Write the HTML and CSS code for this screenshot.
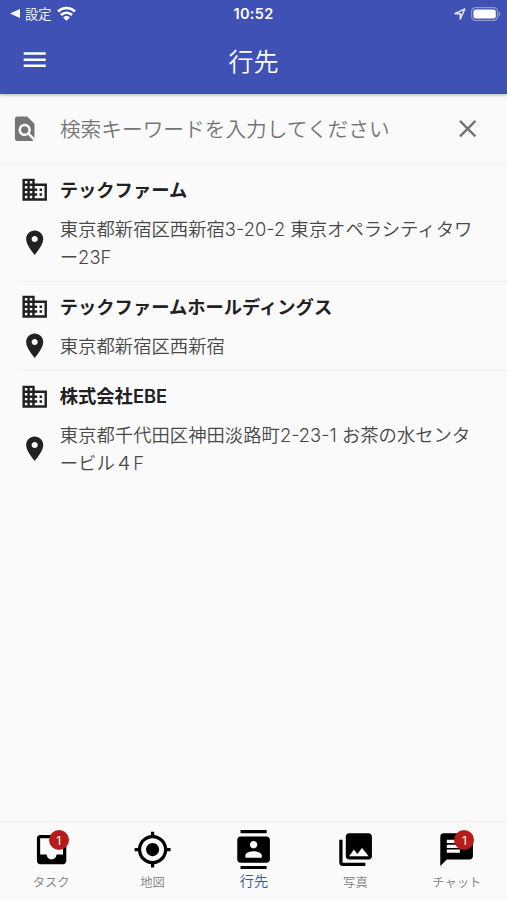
FILE: index.html
```html
<!DOCTYPE html>
<html lang="ja">
  <head>
    <meta charset="UTF-8" />
    <title>行先</title>
    <link rel="stylesheet" href="styles.css">
  </head>
  <body>
    <!-- shared icons -->
    <svg class="defs" width="0" height="0">
      <symbol id="building" viewBox="0 0 24 24">
        <path d="M12 7V3H2v18h20V7H12zM6 19H4v-2h2v2zm0-4H4v-2h2v2zm0-4H4V9h2v2zm0-4H4V5h2v2zm4 12H8v-2h2v2zm0-4H8v-2h2v2zm0-4H8V9h2v2zm0-4H8V5h2v2zm10 12h-8v-2h2v-2h-2v-2h2v-2h-2V9h8v10zm-2-8h-2v2h2v-2zm0 4h-2v2h2v-2z" />
      </symbol>
      <symbol id="pin" viewBox="0 0 24 24">
        <path d="M12 2C8.13 2 5 5.13 5 9c0 5.25 7 13 7 13s7-7.75 7-13c0-3.87-3.13-7-7-7zm0 9.5c-1.38 0-2.5-1.12-2.5-2.5s1.12-2.5 2.5-2.5 2.5 1.12 2.5 2.5-1.12 2.5-2.5 2.5z" />
      </symbol>
    </svg>

    <header class="header">
      <div class="status-bar">
        <div class="status-left">
          <svg class="back" viewBox="0 0 10 9"><path d="M0 4.5L10 0v9z" /></svg>
          <span class="back-label">設定</span>
          <svg class="wifi" viewBox="0 0 18 14">
            <path d="M1 5.1a11.4 11.4 0 0 1 16 0M3.8 8.4a7.4 7.4 0 0 1 10.4 0" />
            <path class="dot" d="M9 13.8L5.8 10.7a4.6 4.6 0 0 1 6.4 0z" />
          </svg>
        </div>
        <div class="clock">10:52</div>
        <div class="status-right">
          <svg class="location" viewBox="0 0 12 12"><path d="M1 5.6L10.8 1 6.3 10.9V5.7z" /></svg>
          <svg class="battery" viewBox="0 0 30 14">
            <rect class="shell" x="0.6" y="0.6" width="26" height="12.8" rx="4" />
            <rect class="level" x="2.4" y="2.4" width="22.4" height="9.2" rx="2.3" />
            <path class="cap" d="M27.8 4.5q3.4 2.5 0 5z" />
          </svg>
        </div>
      </div>
      <div class="toolbar">
        <svg class="icon" viewBox="0 0 24 24"><path d="M3 18h18v-2H3v2zm0-5h18v-2H3v2zm0-7v2h18V6H3z" /></svg>
        <h1 class="title">行先</h1>
      </div>
    </header>

    <div class="search">
      <svg class="icon" viewBox="0 0 24 24"><path d="M20 19.59V8l-6-6H6c-1.1 0-1.99.9-1.99 2L4 20c0 1.1.89 2 1.99 2H18c.45 0 .85-.15 1.19-.4l-4.43-4.43c-.8.52-1.74.83-2.76.83-2.76 0-5-2.24-5-5s2.24-5 5-5 5 2.24 5 5c0 1.02-.31 1.96-.83 2.75L20 19.59zM9 13c0 1.66 1.34 3 3 3s3-1.34 3-3-1.34-3-3-3-3 1.34-3 3z" /></svg>
      <span class="placeholder">検索キーワードを入力してください</span>
      <svg class="icon" viewBox="0 0 24 24"><path d="M19 6.41L17.59 5 12 10.59 6.41 5 5 6.41 10.59 12 5 17.59 6.41 19 12 13.41 17.59 19 19 17.59 13.41 12z" /></svg>
    </div>

    <main class="list">
      <div class="item">
        <div class="row name">
          <svg class="icon"><use href="#building" /></svg>
          <span>テックファーム</span>
        </div>
        <div class="row address">
          <svg class="icon"><use href="#pin" /></svg>
          <span>東京都新宿区西新宿3-20-2 東京オペラシティタワ<br>ー23F</span>
        </div>
      </div>
      <div class="item">
        <div class="row name">
          <svg class="icon"><use href="#building" /></svg>
          <span>テックファームホールディングス</span>
        </div>
        <div class="row address">
          <svg class="icon"><use href="#pin" /></svg>
          <span>東京都新宿区西新宿</span>
        </div>
      </div>
      <div class="item">
        <div class="row name">
          <svg class="icon"><use href="#building" /></svg>
          <span>株式会社EBE</span>
        </div>
        <div class="row address">
          <svg class="icon"><use href="#pin" /></svg>
          <span>東京都千代田区神田淡路町2-23-1 お茶の水センタ<br>ービル４F</span>
        </div>
      </div>
    </main>

    <nav class="tabs">
      <div class="tab">
        <svg class="tab-icon" viewBox="0 0 24 24"><path d="M19 3H4.99c-1.11 0-1.98.89-1.98 2L3 19c0 1.1.88 2 1.99 2H19c1.1 0 2-.9 2-2V5c0-1.11-.9-2-2-2zm0 12h-4c0 1.66-1.35 3-3 3s-3-1.34-3-3H4.99V5H19v10z" /></svg>
        <span class="badge">1</span>
        <span class="label">タスク</span>
      </div>
      <div class="tab">
        <svg class="tab-icon" viewBox="0 0 24 24"><path d="M12 8c-2.21 0-4 1.79-4 4s1.79 4 4 4 4-1.79 4-4-1.79-4-4-4zm8.94 3c-.46-4.17-3.77-7.48-7.94-7.94V1h-2v2.06C6.83 3.52 3.52 6.83 3.06 11H1v2h2.06c.46 4.17 3.77 7.48 7.94 7.94V23h2v-2.06c4.17-.46 7.48-3.77 7.94-7.94H23v-2h-2.06zM12 19c-3.87 0-7-3.13-7-7s3.13-7 7-7 7 3.13 7 7-3.13 7-7 7z" /></svg>
        <span class="label">地図</span>
      </div>
      <div class="tab active">
        <svg class="tab-icon" viewBox="0 0 24 24"><path d="M20 0H4v2h16V0zM4 24h16v-2H4v2zM20 4H4c-1.1 0-2 .9-2 2v12c0 1.1.9 2 2 2h16c1.1 0 2-.9 2-2V6c0-1.1-.9-2-2-2zm-8 2.75c1.24 0 2.25 1.01 2.25 2.25s-1.01 2.25-2.25 2.25S9.75 10.24 9.75 9 10.76 6.75 12 6.75zM17 17H7v-1.5c0-1.67 3.33-2.5 5-2.5s5 .83 5 2.5V17z" /></svg>
        <span class="label">行先</span>
      </div>
      <div class="tab">
        <svg class="tab-icon" viewBox="0 0 24 24"><path d="M22 16V4c0-1.1-.9-2-2-2H8c-1.1 0-2 .9-2 2v12c0 1.1.9 2 2 2h12c1.1 0 2-.9 2-2zm-11-4l2.03 2.71L16 11l4 5H8l3-4zM2 6v14c0 1.1.9 2 2 2h14v-2H4V6H2z" /></svg>
        <span class="label">写真</span>
      </div>
      <div class="tab">
        <svg class="tab-icon" viewBox="0 0 24 24"><path d="M20 2H4c-1.1 0-1.99.9-1.99 2L2 22l4-4h14c1.1 0 2-.9 2-2V4c0-1.1-.9-2-2-2zM6 9h12v2H6V9zm8 5H6v-2h8v2zm4-6H6V6h12v2z" /></svg>
        <span class="badge">1</span>
        <span class="label">チャット</span>
      </div>
    </nav>
  </body>
</html>
```

FILE: styles.css
```css
* {
  box-sizing: border-box;
}

body {
  margin: 0;
  height: 900px;
  display: flex;
  flex-direction: column;
  overflow: hidden;
  background-color: #fafafa;
  color: #212121;
  font-family: Inter, "Noto Sans CJK JP", sans-serif;
}

svg {
  display: block;
  flex: none;
  fill: currentColor;
}

.defs {
  position: absolute;
}

.icon {
  width: 29.4px;
  height: 29.4px;
}

/* Header */
.header {
  height: 94px;
  flex: none;
  background-color: #3f51b5;
  color: #fff;
  box-shadow: 0 1px 3px rgba(0, 0, 0, 0.3);
  z-index: 1;
}

.status-bar {
  height: 27px;
  display: grid;
  grid-template-columns: 1fr auto 1fr;
  align-items: center;
  padding: 0 6px 0 10px;
}

.status-left,
.status-right {
  display: flex;
  align-items: center;
}

.status-right {
  justify-content: flex-end;
  gap: 5px;
}

.back {
  width: 10px;
  height: 9px;
}

.back-label {
  margin: 0 6px 0 5px;
  font-size: 13.2px;
  line-height: 20px;
  font-weight: 350;
}

.wifi {
  width: 19px;
  height: 15px;
  margin-bottom: 1px;
  fill: none;
  stroke: #fff;
  stroke-width: 2.5;
}

.wifi .dot {
  fill: #fff;
  stroke: none;
}

.clock {
  font-size: 14.5px;
  font-weight: 600;
  letter-spacing: 0.3px;
  padding-right: 4px;
}

.location {
  width: 12px;
  height: 12px;
  fill: none;
  stroke: #dfe3f5;
  stroke-width: 1.6;
  stroke-linejoin: round;
}

.battery {
  width: 30px;
  height: 14px;
}

.shell {
  fill: none;
  stroke: #8c97d3;
  stroke-width: 1.2;
}

.cap {
  fill: #8c97d3;
}

.toolbar {
  height: 66px;
  display: grid;
  grid-template-columns: 1fr auto 1fr;
  align-items: center;
  padding: 0 20px;
}

.title {
  margin: 0;
  padding-top: 3px;
  font-size: 25px;
  line-height: 36px;
  font-weight: 350;
}

/* Search */
.search {
  height: 71px;
  flex: none;
  display: flex;
  align-items: center;
  padding: 0 25px 0 10px;
  border-bottom: 1px solid #efefef;
  color: #757575;
}

.placeholder {
  flex: 1;
  margin-left: 20.5px;
  padding-top: 1px;
  font-size: 20.7px;
  line-height: 30px;
  font-weight: 350;
}

/* List */
.list {
  flex: 1;
}

.item {
  margin-left: 20px;
  padding: 10.5px 0 10px;
  border-bottom: 1px solid #efefef;
}

.item:last-child {
  border-bottom: none;
}

.row {
  display: flex;
  align-items: center;
  gap: 10.4px;
  white-space: nowrap;
  font-size: 18.35px;
  line-height: 28px;
}

.name {
  height: 29px;
  font-size: 18.3px;
  font-weight: 600;
}

.address {
  margin-top: 10px;
}

.address span {
  color: #484848;
  font-weight: 350;
}

/* Bottom tabs */
.tabs {
  height: 79px;
  flex: none;
  display: flex;
  border-top: 1px solid #f0f0f0;
}

.tab {
  position: relative;
  flex: 1;
  display: flex;
  flex-direction: column;
  align-items: center;
  padding-top: 8px;
  padding-left: 1px;
  color: #000;
}

.tab-icon {
  width: 39.2px;
  height: 39.2px;
}

.label {
  margin-top: 5px;
  font-size: 12.3px;
  line-height: 18px;
  font-weight: 350;
  color: #808080;
}

.active .label {
  margin-top: 3px;
  font-size: 14.2px;
  color: #3f51b5;
}

.badge {
  position: absolute;
  top: 8px;
  left: calc(50% - 2px);
  width: 20px;
  height: 20px;
  border-radius: 50%;
  background-color: #b71c1c;
  color: #fff;
  font-size: 12px;
  line-height: 21px;
  text-align: center;
}
```
